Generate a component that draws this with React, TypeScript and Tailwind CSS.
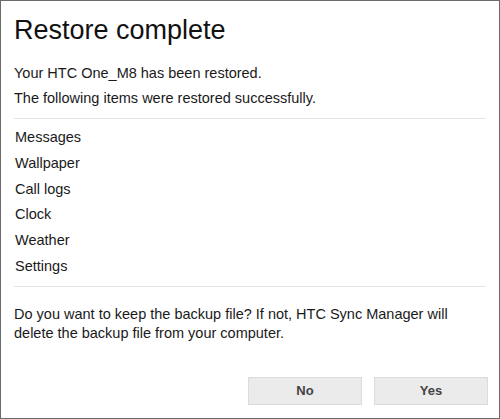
import React from "react";

export default function App() {
  const items = ["Messages", "Wallpaper", "Call logs", "Clock", "Weather", "Settings"];
  return (
    <div
      className="w-[500px] h-[419px] bg-white border border-[#6b6b6b] flex flex-col text-[#1a1a1a]"
      style={{ fontFamily: '"Liberation Sans", Arial, sans-serif' }}
    >
      <div className="px-[13px] pt-[11px]">
        <h1 className="text-[27px] leading-[36px] text-[#111]">Restore complete</h1>
        <p className="mt-[13px] text-[14.5px] leading-[25px]">Your HTC One_M8 has been restored.</p>
        <p className="text-[14.5px] leading-[25px]">The following items were restored successfully.</p>
      </div>
      <div className="mx-[13px] mt-[7px] border-t border-[#e6e6e6]" />
      <ul className="px-[14px] pt-[6px] text-[14.5px]">
        {items.map((it) => (
          <li key={it} className="leading-[25.8px]">{it}</li>
        ))}
      </ul>
      <div className="mx-[13px] mt-[6px] border-t border-[#e6e6e6]" />
      <p className="px-[13px] pt-[18px] text-[14.5px] leading-[19px]">
        Do you want to keep the backup file? If not, HTC Sync Manager will
        <br />
        delete the backup file from your computer.
      </p>
      <div className="flex-1" />
      <div className="flex justify-end gap-[12px] px-[11px] pb-[13px]">
        <button className="w-[114px] h-[28px] bg-[#ebebeb] border border-[#dcdcdc] text-[13px] font-bold text-[#444]">
          No
        </button>
        <button className="w-[114px] h-[28px] bg-[#ebebeb] border border-[#dcdcdc] text-[13px] font-bold text-[#444]">
          Yes
        </button>
      </div>
    </div>
  );
}
